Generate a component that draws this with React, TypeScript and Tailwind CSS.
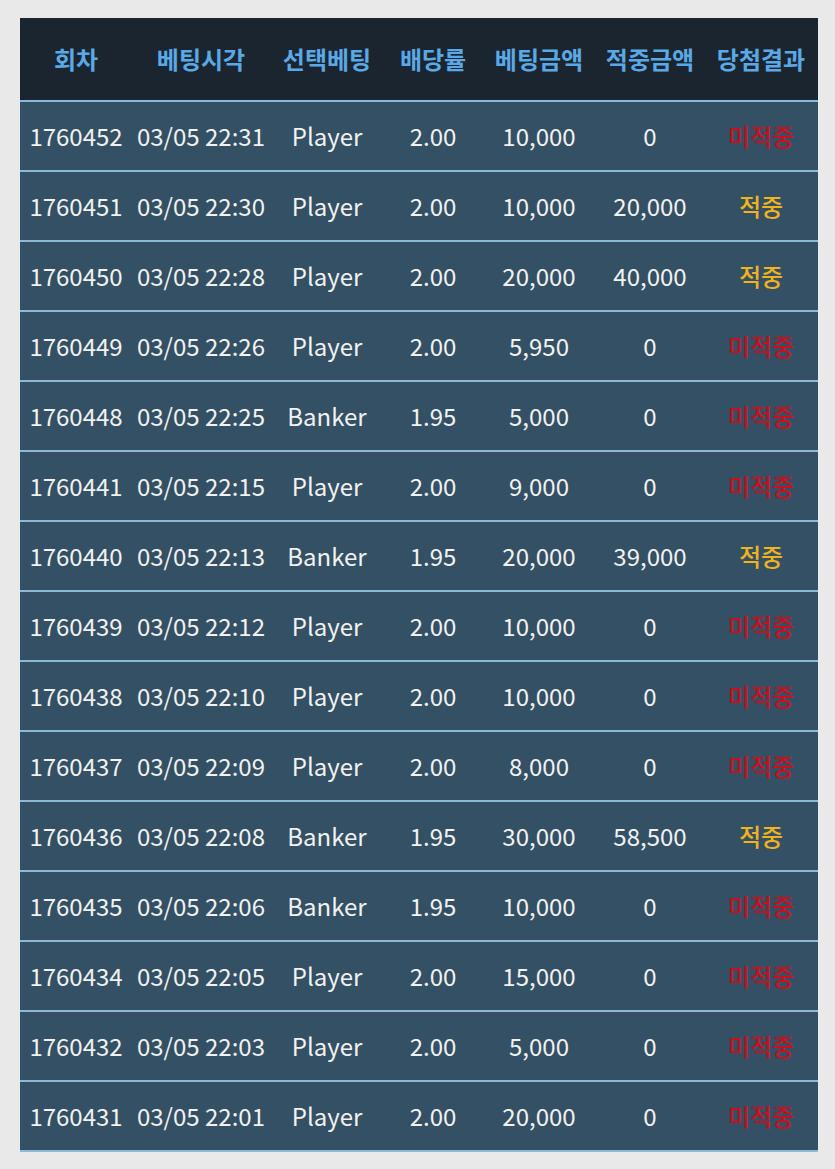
const rows = [
  { id: '1760452', time: '03/05 22:31', pick: 'Player', odds: '2.00', bet: '10,000', win: '0', result: '미적중' },
  { id: '1760451', time: '03/05 22:30', pick: 'Player', odds: '2.00', bet: '10,000', win: '20,000', result: '적중' },
  { id: '1760450', time: '03/05 22:28', pick: 'Player', odds: '2.00', bet: '20,000', win: '40,000', result: '적중' },
  { id: '1760449', time: '03/05 22:26', pick: 'Player', odds: '2.00', bet: '5,950', win: '0', result: '미적중' },
  { id: '1760448', time: '03/05 22:25', pick: 'Banker', odds: '1.95', bet: '5,000', win: '0', result: '미적중' },
  { id: '1760441', time: '03/05 22:15', pick: 'Player', odds: '2.00', bet: '9,000', win: '0', result: '미적중' },
  { id: '1760440', time: '03/05 22:13', pick: 'Banker', odds: '1.95', bet: '20,000', win: '39,000', result: '적중' },
  { id: '1760439', time: '03/05 22:12', pick: 'Player', odds: '2.00', bet: '10,000', win: '0', result: '미적중' },
  { id: '1760438', time: '03/05 22:10', pick: 'Player', odds: '2.00', bet: '10,000', win: '0', result: '미적중' },
  { id: '1760437', time: '03/05 22:09', pick: 'Player', odds: '2.00', bet: '8,000', win: '0', result: '미적중' },
  { id: '1760436', time: '03/05 22:08', pick: 'Banker', odds: '1.95', bet: '30,000', win: '58,500', result: '적중' },
  { id: '1760435', time: '03/05 22:06', pick: 'Banker', odds: '1.95', bet: '10,000', win: '0', result: '미적중' },
  { id: '1760434', time: '03/05 22:05', pick: 'Player', odds: '2.00', bet: '15,000', win: '0', result: '미적중' },
  { id: '1760432', time: '03/05 22:03', pick: 'Player', odds: '2.00', bet: '5,000', win: '0', result: '미적중' },
  { id: '1760431', time: '03/05 22:01', pick: 'Player', odds: '2.00', bet: '20,000', win: '0', result: '미적중' },
];

const headers = ['회차', '베팅시각', '선택베팅', '배당률', '베팅금액', '적중금액', '당첨결과'];

const cols = 'grid grid-cols-[112px_138px_114px_98px_114px_108px_114px]';

export default function App() {
  return (
    <div
      className="min-h-[1169px] w-[835px] bg-[#e9e9e9] pt-[18px] pl-[20px]"
      style={{ fontFamily: '"Noto Sans CJK KR", "Noto Sans", sans-serif' }}
    >
      <div className="w-[798px]">
        <div className={`${cols} h-[82px] items-center bg-[#1a252f] text-[24px] font-bold text-[#5aa9e6]`}>
          {headers.map((h) => (
            <div key={h} className="text-center">
              {h}
            </div>
          ))}
        </div>
        {rows.map((r, i) => (
          <div
            key={r.id}
            className={`${cols} h-[70px] items-center border-t-2 border-[#8bbad8] bg-[#345064] text-[24px] text-[#f2f2f2] ${
              i == rows.length - 1 ? 'h-[72px] border-b-2' : ''
            }`}
          >
            <div className="text-center">{r.id}</div>
            <div className="text-center">{r.time}</div>
            <div className="text-center">{r.pick}</div>
            <div className="text-center">{r.odds}</div>
            <div className="text-center">{r.bet}</div>
            <div className="text-center">{r.win}</div>
            <div
              className={`text-center text-[24px] font-medium ${
                r.result == '적중' ? 'text-[#f2b31c]' : 'text-[#c8101e]'
              }`}
            >
              {r.result}
            </div>
          </div>
        ))}
      </div>
    </div>
  );
}
